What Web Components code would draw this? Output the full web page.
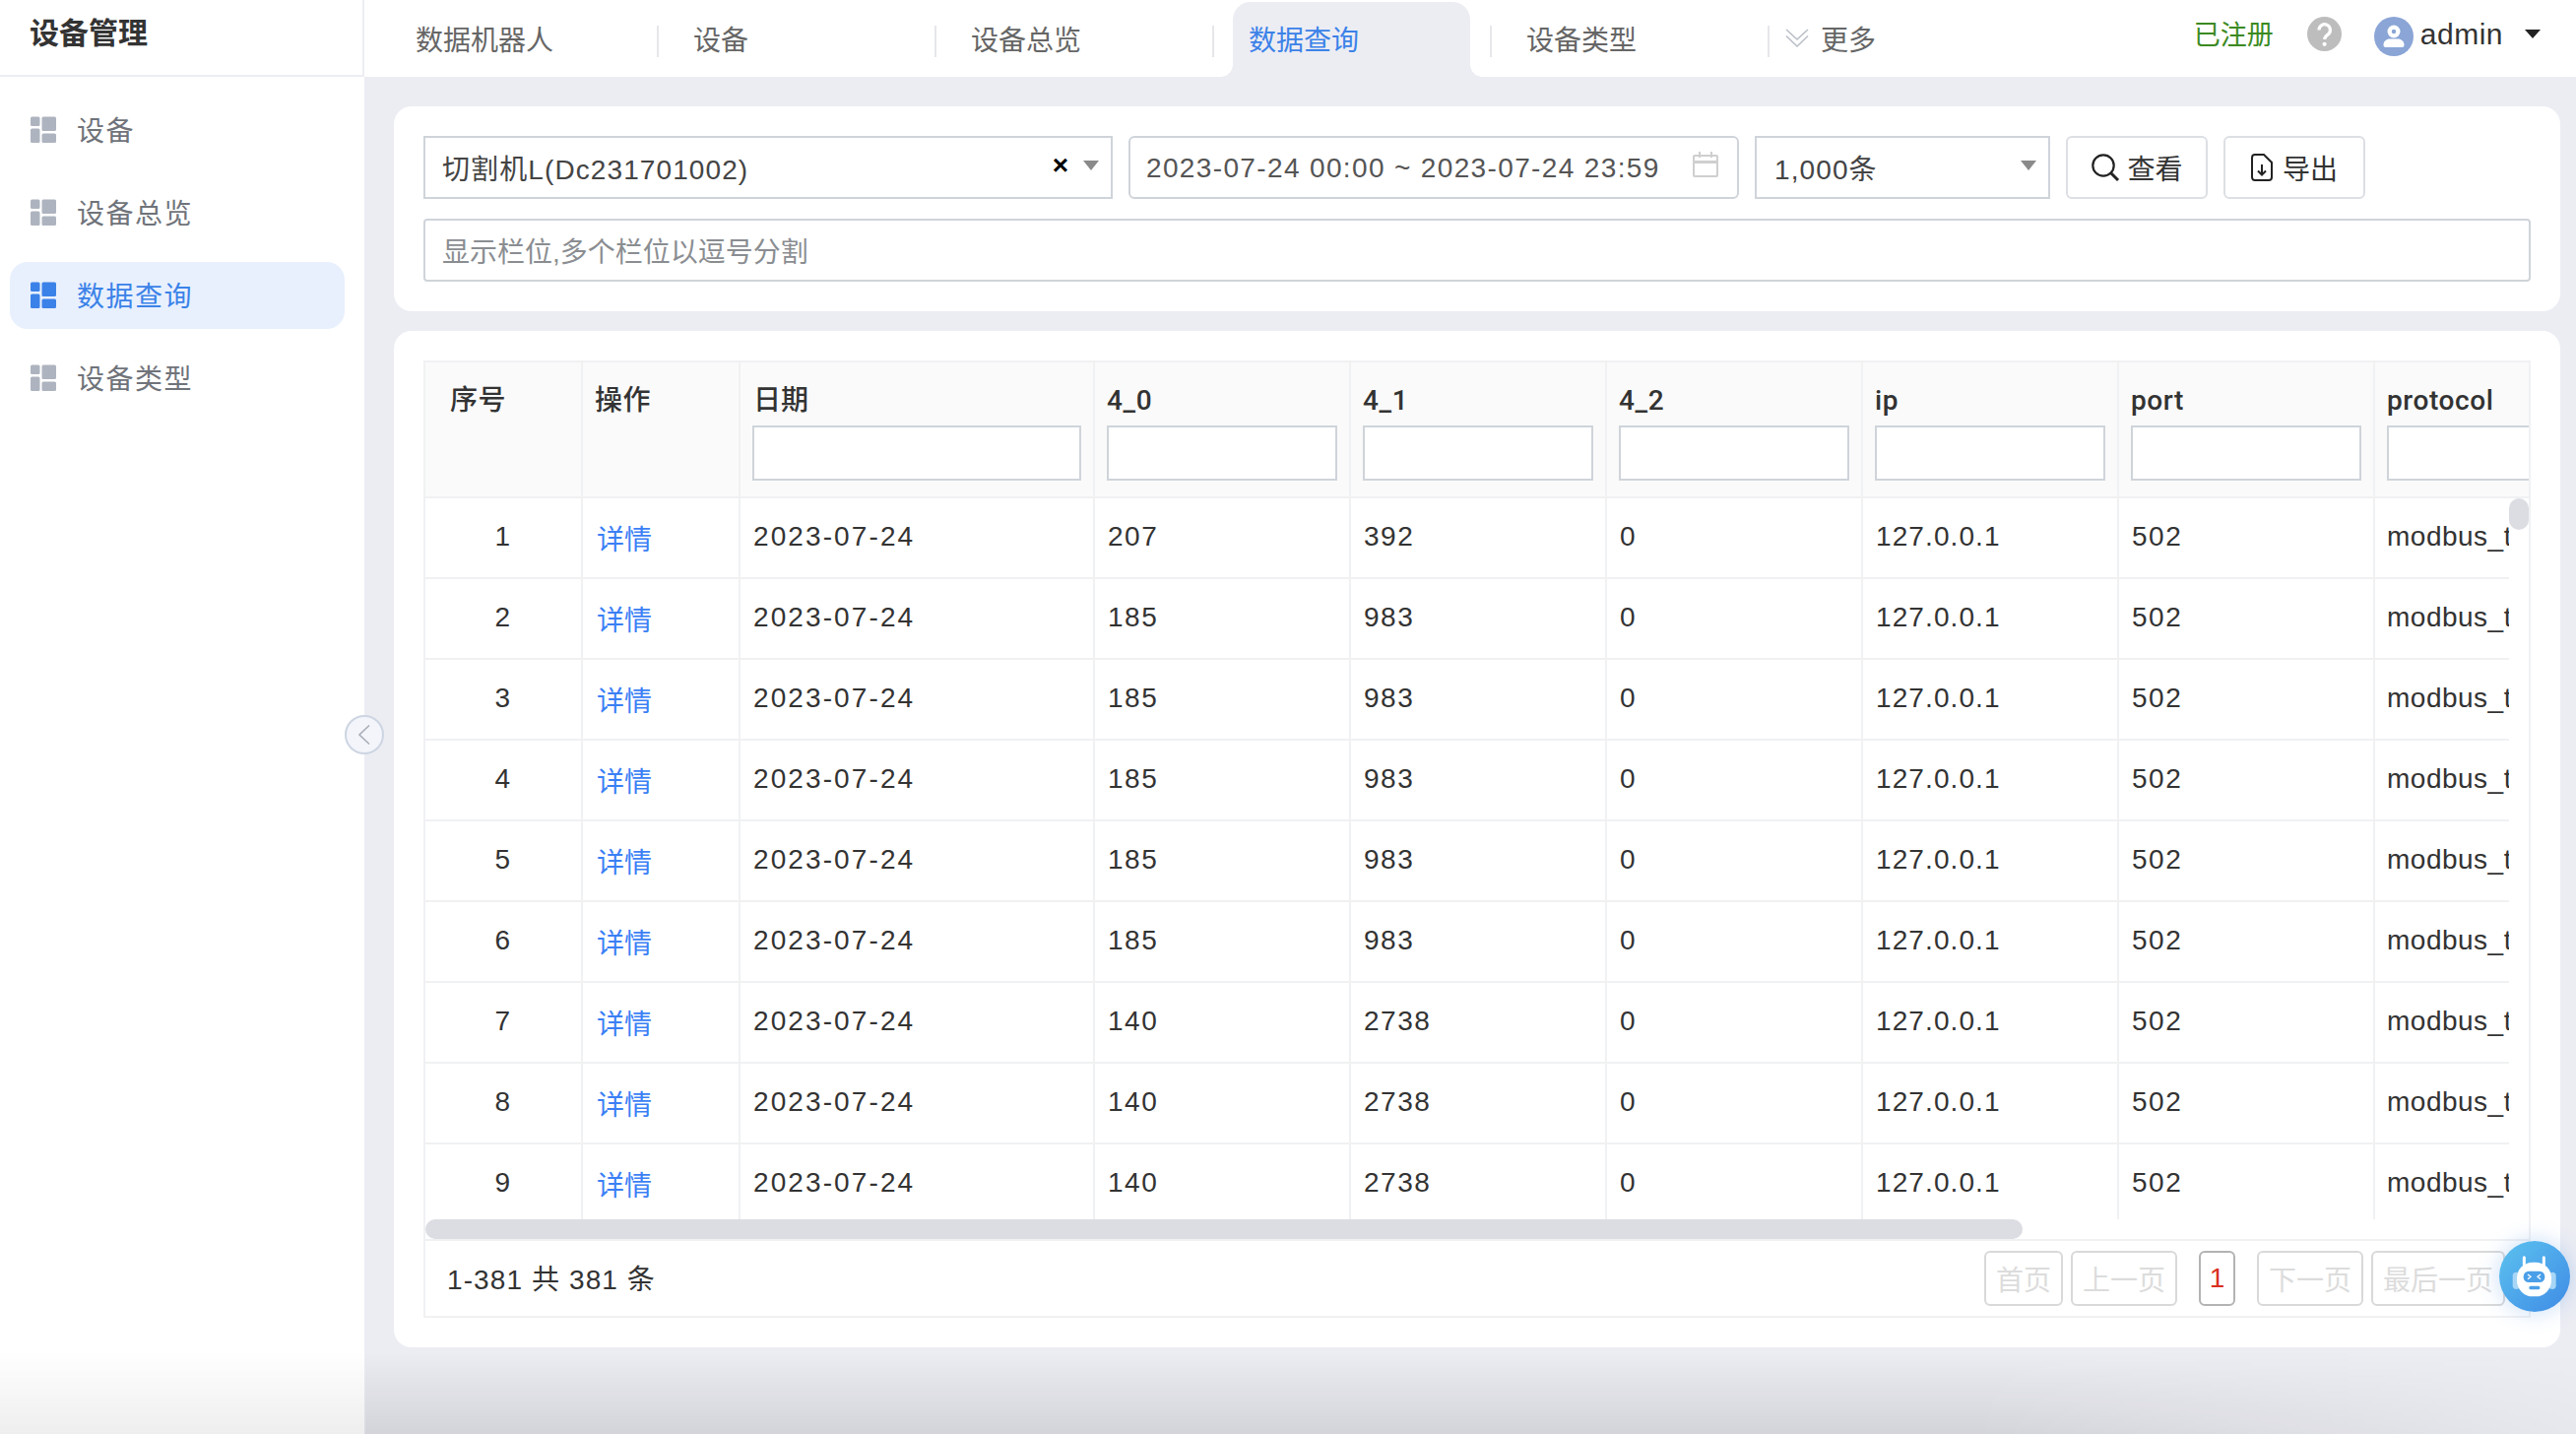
<!DOCTYPE html>
<html lang="zh-CN">
<head>
<meta charset="utf-8">
<title>设备管理</title>
<style>
  html, body { margin: 0; height: 100%; background: #ecedf3; }
  body { font-family: "Liberation Sans", "Noto Sans CJK SC", sans-serif; font-size: 28px; color: #333; overflow: hidden; }
</style>
</head>
<body>
<app-shell>
  <side-nav slot="side">
    <nav-item>设备</nav-item>
    <nav-item>设备总览</nav-item>
    <nav-item active>数据查询</nav-item>
    <nav-item>设备类型</nav-item>
  </side-nav>
  <top-bar slot="top">
    <tab-item>数据机器人</tab-item>
    <tab-item>设备</tab-item>
    <tab-item>设备总览</tab-item>
    <tab-item active>数据查询</tab-item>
    <tab-item>设备类型</tab-item>
  </top-bar>
  <filter-card>
    <field-box style="width:700px" square arrow clear>切割机L(Dc231701002)</field-box>
    <date-box style="width:620px">2023-07-24 00:00 ~ 2023-07-24 23:59</date-box>
    <field-box style="width:300px" square arrow pad="18">1,000条</field-box>
    <tool-button icon="search">查看</tool-button>
    <tool-button icon="export">导出</tool-button>
    <field-box style="width:2140px" placeholder>显示栏位,多个栏位以逗号分割</field-box>
  </filter-card>
  <table-card>
    <data-table></data-table>
  </table-card>
</app-shell>

<script>
// 小工具：定义一个只有模板的组件
const font = `"Liberation Sans", "Noto Sans CJK SC", sans-serif`;

class AppShell extends HTMLElement {
  constructor() {
    super();
    this.attachShadow({ mode: "open" }).innerHTML = `
      <style>
        :host { display: grid; grid-template-columns: 370px 1fr; grid-template-rows: 78px 1fr; width: 2616px; height: 1456px; position: relative; overflow: hidden; }
        .side { grid-row: 1 / 3; background: #fff; }
        .main { padding: 30px 16px 0 30px; display: flex; flex-direction: column; gap: 20px; min-width: 0; }
        .toggle { position: absolute; left: 350px; top: 726px; width: 40px; height: 40px; box-sizing: border-box; border-radius: 50%; background: #f3f5fa; border: 2px solid #cdd5e2; display: flex; align-items: center; justify-content: center; }
        .robot { position: absolute; left: 2538px; top: 1260px; width: 72px; height: 72px; border-radius: 50%; background: linear-gradient(135deg, #5cc2ef, #3f8be5); box-shadow: 0 0 22px rgba(70, 140, 230, .3); }
        .robot svg { display: block; }
        .fade { position: absolute; left: 0; right: 0; bottom: 0; height: 84px; pointer-events: none; background: linear-gradient(rgba(0,0,0,0), rgba(0,0,0,.1)); -webkit-mask-image: linear-gradient(90deg, rgba(0,0,0,.65) 0, rgba(0,0,0,.65) 370px, #000 372px, #000 2000px, rgba(0,0,0,.2) 2616px); }
      </style>
      <div class="side"><slot name="side"></slot></div>
      <slot name="top"></slot>
      <div class="main"><slot></slot></div>
      <div class="toggle"><svg width="14" height="22" viewBox="0 0 14 22" fill="none" stroke="#a9adb7" stroke-width="1.6"><path d="M12 1.5 2 11l10 9.500"/></svg></div>
      <div class="robot"><svg width="72" height="72" viewBox="24 30 216 216">
        <rect x="65" y="125" width="22" height="52" rx="11" fill="#a8d6f6"/><rect x="175" y="125" width="22" height="52" rx="11" fill="#a8d6f6"/>
        <path d="M100 80v24M160 80v24" stroke="#fff" stroke-width="9" stroke-linecap="round"/>
        <rect x="78" y="95" width="105" height="104" rx="48" fill="#fff"/>
        <rect x="98" y="122" width="65" height="34" rx="16" fill="#4b9fe8"/>
        <path d="M111 132l9 7-9 7M150 132l-9 7 9 7" fill="none" stroke="#fff" stroke-width="4"/>
        <rect x="115" y="167" width="33" height="11" rx="5" fill="#4b9fe8"/>
      </svg></div>
      <div class="fade"></div>`;
  }
}

class SideNav extends HTMLElement {
  constructor() {
    super();
    this.attachShadow({ mode: "open" }).innerHTML = `
      <style>
        :host { display: block; }
        header { height: 76px; box-sizing: content-box; border-bottom: 2px solid #eceef3; border-right: 2px solid #eceef3; padding-left: 30px; font: 700 30px/68px ${font}; color: #333; }
        ul { list-style: none; margin: 0; padding: 20px 20px 0 10px; display: flex; flex-direction: column; gap: 16px; }
      </style>
      <header>设备管理</header>
      <ul><slot></slot></ul>`;
  }
}

class NavItem extends HTMLElement {
  constructor() {
    super();
    this.attachShadow({ mode: "open" }).innerHTML = `
      <style>
        :host { display: flex; align-items: center; gap: 21px; height: 68px; padding: 0 0 2px 20px; box-sizing: border-box; border-radius: 18px; color: #6f737a; font-size: 28px; letter-spacing: 1.500px; }
        :host([active]) { background: #e8f0fd; color: #3b82e8; }
        svg { fill: #aeb4bf; flex: none; }
        :host([active]) svg { fill: #3b82e8; }
      </style>
      <svg width="27" height="27" viewBox="0 0 27 27">
        <rect x="1" y=".5" width="9.500" height="9.500" rx="1.500"/><rect x="1" y="12.500" width="9.500" height="14.500" rx="1.500"/>
        <rect x="12.500" y=".5" width="14.500" height="14.500" rx="1.500"/><rect x="12.500" y="17.500" width="14.500" height="9.500" rx="1.500"/>
      </svg>
      <slot></slot>`;
  }
}

class TopBar extends HTMLElement {
  constructor() {
    super();
    this.attachShadow({ mode: "open" }).innerHTML = `
      <style>
        :host { display: flex; height: 78px; background: #fff; padding-left: 15px; position: relative; }
        .tabs { display: flex; }
        .more { display: flex; align-items: center; gap: 12px; margin-left: 18px; height: 78px; padding-bottom: 1px; box-sizing: border-box; color: #666; font-size: 28px; }
        .user { margin-left: auto; display: flex; align-items: center; height: 68px; padding-right: 36px; }
        .reg { color: #3b8a22; font-size: 27px; width: 82px; white-space: nowrap; margin-top: -2px; }
        .help { margin-left: 33px; }
        .avatar { margin-left: 33px; margin-top: 6px; }
        .name { margin-left: 7px; font: 30px ${font}; letter-spacing: .5px; color: #333; margin-top: 2px; }
        .caret { margin-left: 22px; width: 0; height: 0; border: 8.500px solid transparent; border-top: 9px solid #222; border-bottom: 0; }
        svg { display: block; flex: none; }
      </style>
      <div class="tabs"><slot></slot></div>
      <div class="more">
        <svg width="24" height="19" viewBox="0 0 24 19" fill="none" stroke="#b9bdc6" stroke-width="1.500"><path d="M1 1l11 10L23 1M1 7.500 12 18 23 7.500"/></svg>
        <span>更多</span>
      </div>
      <div class="user">
        <span class="reg">已注册</span>
        <svg class="help" width="35" height="35" viewBox="0 0 35 35"><circle cx="17.500" cy="17.500" r="17.500" fill="#bdbdbd"/><path d="M12 13.500a5.700 5.700 0 1 1 9 4.600c-2.200 1.500-3.300 2.500-3.300 5" fill="none" stroke="#fff" stroke-width="3.200"/><circle cx="17.600" cy="27.800" r="2.100" fill="#fff"/></svg>
        <svg class="avatar" width="40" height="40" viewBox="0 0 40 40"><circle cx="20" cy="20" r="20" fill="#8aa5d6"/><circle cx="20" cy="15" r="6.500" fill="#fff"/><path d="M11.500 31c-1.500 0-2-1-2-2.500 0-3.500 3-6 6.500-6h8c3.500 0 6.500 2.500 6.500 6 0 1.500-.5 2.500-2 2.500z" fill="#fff"/><circle cx="20" cy="15" r="2.200" fill="#8aa5d6"/></svg>
        <span class="name">admin</span>
        <span class="caret"></span>
      </div>`;
  }
}

class TabItem extends HTMLElement {
  constructor() {
    super();
    this.attachShadow({ mode: "open" }).innerHTML = `
      <style>
        :host { display: block; position: relative; width: 282px; height: 78px; color: #666; font-size: 28px; padding-top: .02px; box-sizing: border-box; }
        :host([active]) { color: #3b82e8; }
        .label { position: relative; margin-top: 26px; height: 32px; line-height: 31px; padding-left: 37px; border-right: 2px solid #e6e7ea; box-sizing: border-box; width: 284px; }
        .bg, .flare { display: none; position: absolute; }
        :host([active]) .bg, :host([active]) .flare { display: block; }
        .bg { left: 21px; right: 20px; top: 2px; bottom: 0; background: #ecedf3; border-radius: 18px 18px 0 0; }
        .flare { bottom: 0; width: 12px; height: 12px; }
        .flare.l { left: 9px; background: radial-gradient(circle at 0 0, transparent 11.500px, #ecedf3 12px); }
        .flare.r { right: 8px; background: radial-gradient(circle at 100% 0, transparent 11.500px, #ecedf3 12px); }
      </style>
      <div class="bg"></div><div class="flare l"></div><div class="flare r"></div>
      <div class="label"><slot></slot></div>`;
  }
}

class FilterCard extends HTMLElement {
  constructor() {
    super();
    this.attachShadow({ mode: "open" }).innerHTML = `
      <style>
        :host { display: flex; flex-wrap: wrap; gap: 20px 16px; box-sizing: border-box; width: 2200px; height: 208px; padding: 30px; background: #fff; border-radius: 18px; align-content: flex-start; }
      </style>
      <slot></slot>`;
  }
}

class FieldBox extends HTMLElement {
  constructor() {
    super();
    const pad = this.getAttribute("pad") || "17";
    this.attachShadow({ mode: "open" }).innerHTML = `
      <style>
        :host { display: flex; align-items: center; box-sizing: border-box; height: 64px; padding: 0 12px 0 ${pad}px; border: 2px solid #cfd4da; border-radius: 4px; background: #fff; color: #444; font-size: 28px; letter-spacing: 1.100px; white-space: nowrap; position: relative; }
        :host([square]) { border-radius: 0; }
        :host([placeholder]) { color: #8a8d91; letter-spacing: 0; }
        .text { flex: 1; }
        .clear { display: none; font: 700 28px/1 "Liberation Sans", sans-serif; color: #000; margin-right: 15px; letter-spacing: 0; margin-top: -4px; }
        :host([clear]) .clear { display: block; }
        .arrow { display: none; width: 0; height: 0; border: 8px solid transparent; border-top: 10px solid #8a8a8a; border-bottom: 0; margin-top: -4px; }
        :host([arrow]) .arrow { display: block; }
      </style>
      <span class="text"><slot></slot></span>
      <span class="clear">×</span>
      <span class="arrow"></span>`;
  }
}

class DateBox extends HTMLElement {
  constructor() {
    super();
    this.attachShadow({ mode: "open" }).innerHTML = `
      <style>
        :host { display: flex; align-items: center; justify-content: space-between; box-sizing: border-box; height: 64px; padding: 2px 19px 0 16px; border: 2px solid #cfd4da; border-radius: 6px; background: #fff; color: #555; font-size: 28px; letter-spacing: 1.360px; white-space: nowrap; }
        svg { display: block; flex: none; margin-top: -8px; }
      </style>
      <span><slot></slot></span>
      <svg width="26" height="26" viewBox="0 0 26 26" fill="none" stroke="#cfcfcf" stroke-width="2"><rect x="1" y="4" width="24" height="21" rx="1"/><path d="M1 10.500h24" stroke-width="3"/><path d="M7 0v6M19 0v6"/></svg>`;
  }
}

class ToolButton extends HTMLElement {
  constructor() {
    super();
    const icons = {
      search: `<svg width="30" height="30" viewBox="0 0 30 30" fill="none" stroke="#222" stroke-width="2.200"><circle cx="13" cy="13" r="10.700"/><path d="M20.500 20.500l7.500 7.500" stroke-width="3"/></svg>`,
      export: `<svg width="22" height="28" viewBox="0 0 22 28" fill="none" stroke="#222" stroke-width="2"><path d="M4 1h9l8 8v15a3 3 0 0 1-3 3H4a3 3 0 0 1-3-3V4a3 3 0 0 1 3-3z"/><path d="M11 11v10M7 17.500l4 4 4-4"/></svg>`
    };
    const gap = this.getAttribute("icon") === "export" ? 10 : 7;
    this.attachShadow({ mode: "open" }).innerHTML = `
      <style>
        :host { display: flex; align-items: center; justify-content: center; gap: ${gap}px; box-sizing: border-box; width: 144px; height: 64px; border: 2px solid #dcdfe3; border-radius: 6px; background: #fff; color: #333; font-size: 28px; }
        svg { display: block; }
      </style>
      ${icons[this.getAttribute("icon")] || ""}<span><slot></slot></span>`;
  }
}

class TableCard extends HTMLElement {
  constructor() {
    super();
    this.attachShadow({ mode: "open" }).innerHTML = `
      <style>
        :host { display: block; box-sizing: border-box; width: 2200px; height: 1032px; padding: 30px; background: #fff; border-radius: 18px; }
      </style>
      <slot></slot>`;
  }
}

class PageButton extends HTMLElement {
  constructor() {
    super();
    this.attachShadow({ mode: "open" }).innerHTML = `
      <style>
        :host { display: flex; align-items: center; justify-content: center; box-sizing: border-box; height: 56px; padding: 0 10px; border: 2px solid #d9d9d9; border-radius: 6px; background: #fff; color: #dcdcdc; font-size: 28px; white-space: nowrap; }
        :host([current]) { width: 37px; padding: 0; border-color: #b3b3b3; color: #d9301f; }
      </style>
      <slot></slot>`;
  }
}

class DataTable extends HTMLElement {
  constructor() {
    super();
    const cols = ["序号", "操作", "日期", "4_0", "4_1", "4_2", "ip", "port", "protocol"];
    const widths = [160, 160, 360, 260, 260, 260, 260, 260, 260];
    const values = [[207, 392]].concat(Array(5).fill([185, 983]), Array(3).fill([140, 2738]));
    const colgroup = `<colgroup>${widths.map(w => `<col style="width:${w}px">`).join("")}</colgroup>`;

    const head = `<tr>${cols.map((c, i) => `
      <th class="${i === 0 ? "first" : ""}"><div class="lbl${i === 2 ? " d" : ""}">${c}</div>${i > 1 ? `<input type="text">` : ""}</th>`).join("")}</tr>`;
    const rows = values.map((v, i) => `<tr>
      <td class="num">${i + 1}</td><td><a>详情</a></td><td class="day">2023-07-24</td>
      <td>${v[0]}</td><td>${v[1]}</td><td>0</td><td class="ip">127.0.0.1</td><td>502</td><td class="proto">modbus_tcp</td></tr>`).join("");

    this.attachShadow({ mode: "open" }).innerHTML = `
      <style>
        :host { display: block; position: relative; box-sizing: border-box; width: 2140px; height: 972px; border: 2px solid #f0f1f3; font-size: 28px; color: #333; }
        table { border-collapse: separate; border-spacing: 0; table-layout: fixed; width: 2240px; }
        .head { height: 138px; overflow: hidden; background: #fafafa; }
        .body { height: 732px; width: 2116px; overflow: hidden; }
        th { padding: 23px 12px 0; box-sizing: content-box; vertical-align: top; text-align: left; font-weight: 500; font-family: Roboto, "Noto Sans CJK SC", sans-serif; background: #fafafa; color: #333; border-right: 2px solid #f0f1f3; border-bottom: 2px solid #f0f1f3; height: 113px; white-space: nowrap; overflow: hidden; }
        th.first { padding-left: 25px; }
        .lbl { height: 32px; line-height: 32px; margin-bottom: 9px; letter-spacing: .6px; }
        .lbl.d { letter-spacing: 0; padding-left: 1px; }
        input { display: block; box-sizing: border-box; width: 100%; height: 56px; margin: 0; padding: 0 8px; border: 2px solid #cfd4da; border-radius: 0; background: #fff; outline: none; }
        td { padding: 0 13px 3px; box-sizing: border-box; border-right: 2px solid #f0f1f3; border-bottom: 2px solid #f0f1f3; height: 82px; white-space: nowrap; overflow: hidden; letter-spacing: 1.500px; }
        td.num { text-align: center; padding-left: 0; padding-right: 0; }
        td.day { letter-spacing: 2.100px; }
        td.ip { letter-spacing: 1.100px; }
        td.proto { letter-spacing: .5px; padding-left: 12px; }
        a { color: #3b7ff5; letter-spacing: 0; margin-left: 1px; position: relative; top: 1px; }
        .thumb-y { position: absolute; right: 0; top: 138px; width: 20px; height: 32px; border-radius: 10px; background: #dcdde3; }
        .hbar { height: 20px; }
        .thumb-x { width: 1622px; height: 20px; border-radius: 10px; background: #dcdde3; }
        .pager { height: 76px; border-top: 2px solid #f0f1f3; display: flex; align-items: center; padding: 0 24px 0 22px; }
        .count { margin-right: auto; letter-spacing: 1.100px; margin-top: -2px; }
        .pager page-button + page-button { margin-left: 8px; }
        .pager page-button[current] { margin: 0 22px; }
        .pager page-button[current] + page-button { margin-left: 0; }
      </style>
      <div class="head"><table>${colgroup}<thead>${head}</thead></table></div>
      <div class="body"><table>${colgroup}<tbody>${rows}</tbody></table></div>
      <div class="thumb-y"></div>
      <div class="hbar"><div class="thumb-x"></div></div>
      <div class="pager">
        <span class="count">1-381 共 381 条</span>
        <page-button>首页</page-button>
        <page-button>上一页</page-button>
        <page-button current>1</page-button>
        <page-button>下一页</page-button>
        <page-button>最后一页</page-button>
      </div>`;
  }
}

customElements.define("app-shell", AppShell);
customElements.define("side-nav", SideNav);
customElements.define("nav-item", NavItem);
customElements.define("top-bar", TopBar);
customElements.define("tab-item", TabItem);
customElements.define("filter-card", FilterCard);
customElements.define("field-box", FieldBox);
customElements.define("date-box", DateBox);
customElements.define("tool-button", ToolButton);
customElements.define("table-card", TableCard);
customElements.define("page-button", PageButton);
customElements.define("data-table", DataTable);
</script>
</body>
</html>
